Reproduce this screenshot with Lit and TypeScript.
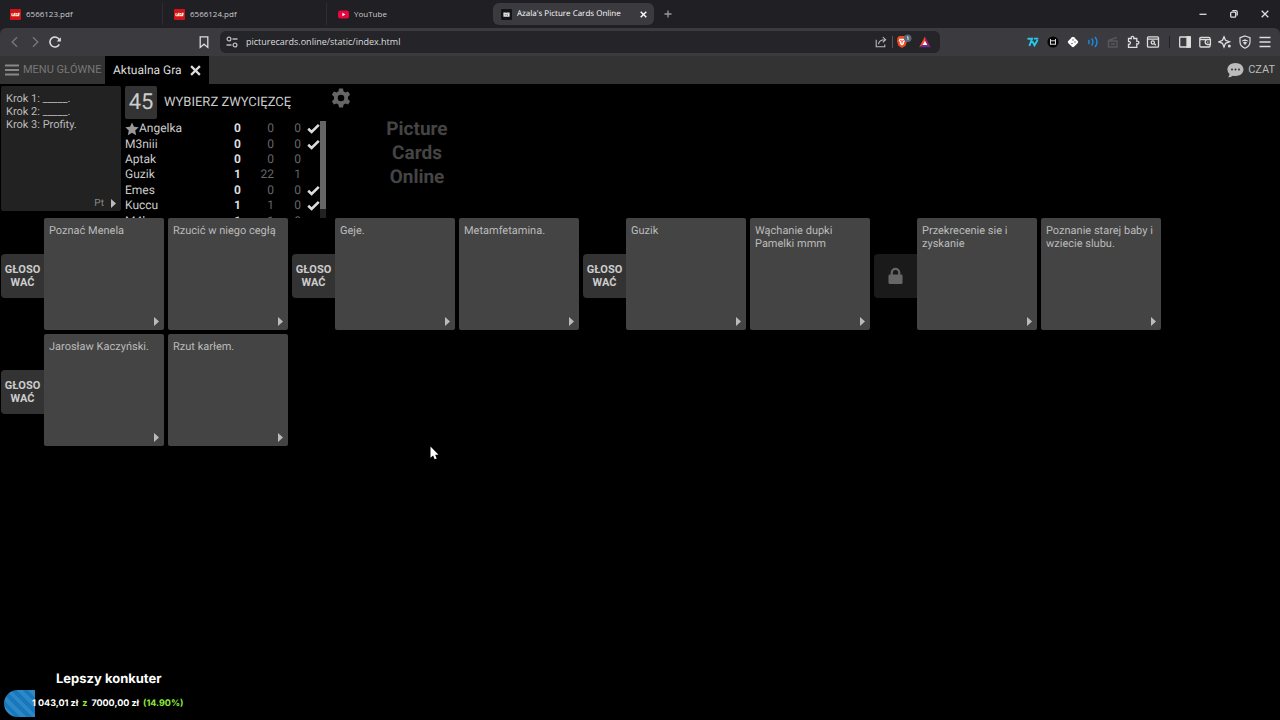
import { LitElement, html, css, svg, nothing } from "lit";
import { customElement } from "lit/decorators.js";

const lego = svg`<svg class="fav" viewBox="0 0 11 11"><rect width="11" height="11" rx="1" fill="#d0121b"/><path d="M1.6 6.6 2.2 4.2M1.6 6.8h1.5M4.2 4.3 3.6 6.8h1.3M4.2 4.4h1.2M4 5.6h1.1M7.2 4.5H6.3L5.8 6.8h1.1l.2-1M9.1 4.4H8.3L7.8 6.8h.9z" stroke="#ffe9c8" stroke-width="1.1" fill="none"/></svg>`;
const youtube = svg`<svg class="fav" viewBox="0 0 11 11"><rect y="1.5" width="11" height="8" rx="2" fill="#e8063c"/><path d="M4.4 3.7v3.6L7.4 5.5z" fill="#fff"/></svg>`;
const azala = svg`<svg class="fav" viewBox="0 0 11 11"><rect width="11" height="11" rx="1" fill="#141416"/><path d="M2.4 3.4h2.200l.5.6.6-.6h2.900v4.400H2.400z" fill="#e4e4e4"/><path d="M4.300 5v1.400M6.600 4.700l-.8 1.200 1 .8" stroke="#555" stroke-width=".7" fill="none"/></svg>`;
const cross = svg`<svg viewBox="0 0 10 10" class="x"><path d="M1 1 9 9M9 1 1 9"/></svg>`;
const check = svg`<svg class="check" viewBox="0 0 13 11"><path d="M1.2 5.8 4.6 9 11.8 1.8" fill="none" stroke="#ddd" stroke-width="2.6"/></svg>`;
const star = svg`<svg class="star" viewBox="0 0 14 14"><path d="M7 .4 9 4.7l4.7.5-3.5 3.2 1 4.8L7 10.8l-4.2 2.4 1-4.8L.3 5.2 5 4.7z" fill="#999"/></svg>`;
const lock = svg`<svg class="lock" viewBox="0 0 16 18"><path d="M4 9V5.4a4 4 0 0 1 8 0V9" fill="none" stroke="#666" stroke-width="2.4"/><rect x=".5" y="7.5" width="15" height="10" rx="1.4" fill="#666"/></svg>`;

type Player = [string, number, number, number, boolean];
const players: Player[] = [
  ["Angelka", 0, 0, 0, true],
  ["M3niii", 0, 0, 0, true],
  ["Aptak", 0, 0, 0, false],
  ["Guzik", 1, 22, 1, false],
  ["Emes", 0, 0, 0, true],
  ["Kuccu", 1, 1, 0, true],
  ["M4lozes", 1, 1, 0, false],
];

const answers: { cards: string[]; own?: boolean }[] = [
  { cards: ["Poznać Menela", "Rzucić w niego cegłą"] },
  { cards: ["Geje.", "Metamfetamina."] },
  { cards: ["Guzik", "Wąchanie dupki Pamelki mmm"] },
  { cards: ["Przekrecenie sie i zyskanie", "Poznanie starej baby i wziecie slubu."], own: true },
  { cards: ["Jarosław Kaczyński.", "Rzut karłem."] },
];

@customElement("browser-chrome")
class BrowserChrome extends LitElement {
  static styles = css`
    :host { display: block; background: #1f1f24; font-family: "Open Sans", sans-serif; color: #ccc; }
    * { box-sizing: border-box; }
    button { border: 0; padding: 0; margin: 0; background: none; color: inherit; font: inherit; display: grid; place-items: center; }
    svg { display: block; }
    .strip { display: flex; align-items: center; height: 28px; }
    .tabs { display: flex; align-items: center; gap: 1px; }
    .tab { width: 164px; height: 22px; padding: 0 0 0 10px; display: flex; align-items: center; gap: 5px; font: 8px/12px "Open Sans", sans-serif; color: #ccc; }
    .tab.split { width: 163px; border-right: 1px solid #2d2d33; }
    .tab.on { width: 161px; background: #3a3a3f; border-radius: 6px; color: #fff; padding: 0 6px 0 8px; }
    .tab .name { flex: 1; text-align: left; white-space: nowrap; }
    .fav { width: 11px; height: 11px; flex: none; }
    .x { width: 8px; height: 8px; stroke: currentColor; stroke-width: 1.6; fill: none; }
    .close { width: 10px; height: 10px; }
    .close .x { width: 7px; height: 7px; stroke-width: 2; }
    .plus { width: 28px; height: 22px; color: #999; }
    .win { margin-left: auto; display: flex; padding-right: 0; color: #ddd; }
    .win button { width: 31px; height: 28px; }
    .bar { display: grid; grid-template-columns: 220px minmax(0, 720px) 1fr; align-items: center; height: 28px; background: #3a3a3f; border-radius: 6px 6px 0 0; }
    .nav { display: flex; align-items: center; padding: 0 8px 0 5px; color: #ddd; }
    .nav button { width: 20px; height: 20px; }
    .nav .dim { color: #77777c; }
    .nav .mark { margin-left: auto; width: 16px; }
    .address { display: flex; align-items: center; height: 22px; border-radius: 6px; background: #242429; padding: 0 6px 0 5px; color: #bbb; }
    .address input { flex: 1; min-width: 0; border: 0; background: none; color: #ddd; font: 9px/14px "Open Sans", sans-serif; padding: 0 0 0 7px; outline: 0; }
    .address button { width: 18px; height: 18px; }
    .site { width: 12px; height: 12px; flex: none; }
    .div { width: 1px; height: 12px; background: #55555a; margin: 0 1px 0 2px; }
    .address .triangle { margin-left: 4px; }
    .ext { display: flex; align-items: center; justify-content: flex-end; padding-right: 5px; color: #ddd; }
    .ext button { width: 20px; height: 20px; }
    .ext .gap { width: 12px; display: grid; place-items: center; }
    .ext .gap::after { content: ""; width: 1px; height: 12px; background: #222226; }
    .i { width: 14px; height: 14px; fill: none; stroke: currentColor; stroke-width: 1.3; }
  `;
  render() {
    return html`
      <div class="strip">
        <div class="tabs" role="tablist">
          <button class="tab split" role="tab">${lego}<span class="name">6566123.pdf</span></button>
          <button class="tab split" role="tab">${lego}<span class="name">6566124.pdf</span></button>
          <button class="tab" role="tab">${youtube}<span class="name">YouTube</span></button>
          <div class="tab on" role="tab" aria-selected="true">${azala}<span class="name">Azala's Picture Cards Online</span>
            <button class="close" aria-label="Zamknij kartę">${cross}</button></div>
        </div>
        <button class="plus" aria-label="Nowa karta"><svg class="i" viewBox="0 0 14 14"><path d="M7 3.5v7M3.5 7h7"/></svg></button>
        <div class="win">
          <button aria-label="Minimalizuj"><svg class="i" viewBox="0 0 14 14"><path d="M3.5 7.3h7"/></svg></button>
          <button aria-label="Przywróć"><svg class="i" viewBox="0 0 14 14"><rect x="3.7" y="5.2" width="5" height="5" rx="1"/><path d="M5.3 3.7h3.6q1.3 0 1.3 1.3v3.6"/></svg></button>
          <button aria-label="Zamknij"><svg class="i" viewBox="0 0 14 14"><path d="m3.7 3.7 6.6 6.6M10.3 3.7l-6.6 6.6"/></svg></button>
        </div>
      </div>
      <div class="bar">
        <div class="nav">
          <button class="dim" aria-label="Wstecz"><svg class="i" viewBox="0 0 14 14"><path d="M9 2.2 4.2 7 9 11.8"/></svg></button>
          <button class="dim" aria-label="Dalej"><svg class="i" viewBox="0 0 14 14"><path d="M5 2.2 9.8 7 5 11.8"/></svg></button>
          <button aria-label="Odśwież"><svg class="i" viewBox="0 0 14 14"><path d="M11.3 9.400A5 5 0 1 1 11.500 5" stroke-width="1.6"/><path d="M12.900 2.300v4.200H8.700z" fill="currentColor" stroke="none"/></svg></button>
          <button class="mark" aria-label="Zakładka"><svg class="i" viewBox="0 0 14 14"><path d="M3.200 1.800h7.600v10.600L7 9.200l-3.800 3.200z"/></svg></button>
        </div>
        <div class="address">
          <svg class="i site" viewBox="0 0 14 14"><circle cx="4" cy="4" r="1.900"/><path d="M7.500 4h5M1.500 10h5"/><circle cx="10" cy="10" r="1.900"/></svg>
          <input aria-label="Adres" value="picturecards.online/static/index.html" />
          <button aria-label="Udostępnij"><svg class="i" viewBox="0 0 14 14"><path d="M2.200 4.800v7h8.600V9.500M4.500 9.300c.3-3 2.500-4.600 6.600-4.600M8.800 2.200l2.800 2.500-2.800 2.600" stroke-width="1.100"/></svg></button>
          <span class="div"></span>
          <button aria-label="Brave Shields"><svg width="18" height="16" viewBox="0 0 18 16"><path d="M3 4.200 5 2h6l2 2.200-.4 1.200.5 1.500-1.500 4.800L8 14l-3.600-2.300L2.900 6.900l.5-1.500z" fill="#ee4a22"/><path d="M5.500 4.700h5l.8 1.800-1.500 2.200.4 1.100L8 11.500 5.800 9.800l.4-1.100-1.500-2.200z" fill="#fff"/><path d="M6.300 6.500 8 7.200l1.700-.7M8 7v2.500" stroke="#ee4a22" fill="none"/><circle cx="13.700" cy="4.300" r="3.800" fill="#596475"/><path d="M13 3.300l1-.6v3.400" stroke="#fff" stroke-width=".8" fill="none"/></svg></button>
          <button class="triangle" aria-label="Nagrody"><svg width="12" height="12" viewBox="0 0 12 12"><path d="M6 .5V8L.2 11.300z" fill="#ff4724"/><path d="M6 .5 11.800 11.300 6 8z" fill="#9e1f63"/><path d="M6 7.500l5.800 3.800H.2z" fill="#662d91"/><path d="M6 4.700 8.300 8.900H3.700z" fill="#fff"/></svg></button>
        </div>
        <div class="ext">
          <button aria-label="7TV"><svg width="12" height="12" viewBox="0 0 12 12" fill="none" stroke="#29c5ea" stroke-width="1.900"><path d="M.5 2.700h4.600L2.400 10M5.300 5.300 7.500 9.300 10.600 4M7 2.600h4.300"/></svg></button>
          <button aria-label="Rozszerzenie"><svg width="12" height="12" viewBox="0 0 12 12"><circle cx="6" cy="6" r="5.600" fill="#050505"/><path d="M3.500 3v5.800M8.500 3v5.800M3.500 4.800h5M4 8.200h4" stroke="#ddd" fill="none"/></svg></button>
          <button aria-label="Rozszerzenie"><svg width="12" height="12" viewBox="0 0 12 12"><path d="M5 1.200Q6 .4 7 1.200l3.800 3.800q.9 1 0 2L7 10.800q-1 .9-2 0L1.200 7q-.9-1 0-2z" fill="#fff"/><circle cx="6" cy="4" r=".7" fill="#555"/><circle cx="8" cy="6" r=".7" fill="#555"/><circle cx="5" cy="7.500" r=".7" fill="#555"/></svg></button>
          <button aria-label="Dźwięk"><svg width="12" height="12" viewBox="0 0 12 12" stroke="#1e88dc" stroke-width="1.500" fill="none"><path d="M1.500 4q1.200 2 0 4M4.700 2.500q2.400 3.500 0 7M8 1q4 5 0 10"/></svg></button>
          <button aria-label="Rozszerzenie"><svg width="12" height="12" viewBox="0 0 12 12" stroke="#58585c" fill="none" stroke-width="1.400"><path d="M1.500 5h8.500v6H1.500zM1.500 4.300 10 1.500M4 8h4"/></svg></button>
          <button aria-label="Rozszerzenia"><svg class="i" viewBox="0 0 14 14"><path d="M2.500 3.500h2.800C4.500.6 8.500.6 7.800 3.500h3v2.800c2.800-.7 2.800 3.300 0 2.600v3.400H2.500V9.300c2.500.4 2.500-3.200 0-2.800z"/></svg></button>
          <button aria-label="Szukaj"><svg class="i" viewBox="0 0 14 14"><rect x="1.500" y="1.800" width="11" height="10.400" rx="1"/><path d="M1.500 4.200h11M8.300 8.700l1.600 1.500"/><circle cx="6.800" cy="7.500" r="1.600"/></svg></button>
          <span class="gap"></span>
          <button aria-label="Panel boczny"><svg class="i" viewBox="0 0 14 14"><rect x="1.700" y="2" width="10.600" height="10" rx=".6"/><path d="M9 2h3.300v10H9z" fill="currentColor"/></svg></button>
          <button aria-label="Portfel"><svg class="i" viewBox="0 0 14 14"><path d="M12 4.700V3.500q0-1-1-1H3q-1.200 0-1.200 1.200V11q0 1 1 1H11q1 0 1-1V9.500M1.800 4.700H12.400v4.800H9.500q-2.300-.2-2.300-2.400T9.500 4.700"/><path d="M9.200 7.100h1.200"/></svg></button>
          <button aria-label="Leo"><svg class="i" viewBox="0 0 14 14"><path d="M6 1.800 7.500 5.300 11.500 6.800 7.500 8.300 6 12 4.500 8.300.9 6.800 4.500 5.300z"/><circle cx="11.300" cy="11" r="1.500" fill="currentColor" stroke="none"/></svg></button>
          <button aria-label="VPN"><svg class="i" viewBox="0 0 14 14"><path d="M7 1 12 2.700V7q0 4-5 6.300Q2 11 2 7V2.700z" stroke-width="1.200"/><path d="M4.200 6q2.800-2.400 5.600 0M5.500 7.600q1.500-1.100 3 0L7 9.500z" fill="currentColor" stroke-width="1"/></svg></button>
          <button aria-label="Menu"><svg class="i" viewBox="0 0 14 14"><path d="M1.500 2.500h11M1.500 7h11M1.500 11.500h11"/></svg></button>
        </div>
      </div>`;
  }
}

@customElement("answer-group")
class AnswerGroup extends LitElement {
  static properties = { cards: { attribute: false }, own: { type: Boolean } };
  declare cards: string[];
  declare own: boolean;
  static styles = css`
    :host { display: flex; align-items: flex-start; }
    * { box-sizing: border-box; }
    .vote { width: 43px; height: 44px; margin-top: 36px; padding: 0; border: 0; border-radius: 4px 0 0 4px; background: #333; color: #ccc; font: bold 11px/13px Roboto, sans-serif; display: grid; place-items: center; }
    .vote.own { background: #1a1a1a; }
    .lock { width: 15px; height: 18px; display: block; }
    .cards { display: flex; gap: 4px; }
    .card { width: 120px; height: 112px; padding: 6px 5px 4px; border-radius: 2px; background: #444; color: #bbb; font: 11px/13px Roboto, sans-serif; display: flex; flex-direction: column; justify-content: space-between; }
    .more { align-self: flex-end; width: 5px; height: 9px; display: block; }
  `;
  render() {
    return html`
      ${this.own
        ? html`<button class="vote own" disabled aria-label="Zablokowane">${lock}</button>`
        : html`<button class="vote"><span>GŁOSO<br />WAĆ</span></button>`}
      <div class="cards">
        ${this.cards.map((c) => html`<article class="card"><span>${c}</span>
          <svg class="more" viewBox="0 0 5 9"><path d="M0 0 5 4.500 0 9z" fill="#bbb"/></svg></article>`)}
      </div>`;
  }
}

@customElement("app-root")
class AppRoot extends LitElement {
  static styles = css`
    :host { display: block; position: relative; min-height: 100vh; overflow: hidden; background: #000; color: #bbb; font-family: Roboto, sans-serif; text-rendering: geometricPrecision; }
    * { box-sizing: border-box; }
    button { border: 0; padding: 0; margin: 0; background: none; color: inherit; font: inherit; }
    svg { display: block; flex: none; }
    .menu { display: flex; height: 28px; background: #333; font-size: 12px; line-height: 16px; }
    .menu button { display: flex; align-items: center; }
    .menu .main { width: 105px; padding-left: 5px; gap: 4px; color: #777; font-size: 11px; white-space: nowrap; }
    .current { display: flex; align-items: center; gap: 8px; width: 104px; padding: 0 8px; justify-content: space-between; background: #000; color: #ddd; white-space: nowrap; }
    .current .x { width: 11px; height: 11px; stroke: #ddd; stroke-width: 2; fill: none; }
    .menu .chat { margin-left: auto; gap: 4px; padding-right: 5px; color: #bbb; font-size: 11px; }
    .top { display: flex; height: 134px; padding: 2px 1px 0; }
    .prompt { width: 120px; height: 125px; padding: 6px 5px 1px; border-radius: 2px; background: #222; color: #bbb; font-size: 11px; line-height: 13px; display: flex; flex-direction: column; justify-content: space-between; }
    .prompt p { margin: 0; }
    .pick { align-self: flex-end; display: flex; align-items: center; gap: 7px; color: #888; font-size: 10px; }
    .board { width: 201px; margin-left: 4px; display: flex; flex-direction: column; gap: 2px; }
    .status { display: flex; align-items: center; gap: 7px; height: 33px; color: #ccc; }
    .timer { width: 32px; height: 33px; background: #333; border-radius: 2px; font-size: 22px; line-height: 34px; text-align: center; }
    .status h1 { margin: 0; font-size: 13px; line-height: 16px; font-weight: 400; white-space: nowrap; }
    .list { display: flex; height: 97px; overflow: hidden; }
    .scores { flex: 1; table-layout: fixed; border-collapse: collapse; height: 108px; font-size: 12px; line-height: 15px; color: #ccc; }
    .scores td { padding: 0; text-align: right; color: #666; }
    .scores .who { width: 88px; text-align: left; color: #ccc; }
    .who span { display: flex; align-items: center; }
    .scores .pts { width: 28px; color: #ddd; font-weight: 700; }
    .scores .num { width: 33px; }
    .scores .tot { width: 27px; }
    .scores .done { padding-left: 6px; }
    .check { width: 13px; height: 11px; }
    .star { width: 14px; height: 14px; }
    .track { width: 6px; background: #222; }
    .thumb { height: 88px; background: #666; }
    .gear { align-self: flex-start; width: 20px; margin: 2px 0 0 5px; }
    .logo { width: 76px; margin: 31px 0 0 28px; font-size: 19px; line-height: 24px; font-weight: 700; color: #444; text-align: center; }
    .answers { display: flex; flex-wrap: wrap; gap: 4px; padding: 0 1px; }
    .goal { position: absolute; left: 4px; bottom: 3px; font: bold 9px/14px Inter, sans-serif; color: #fff; }
    .goal h2 { margin: 0 0 2px; padding-left: 52px; font-size: 13px; line-height: 18px; }
    .meter { display: flex; align-items: center; height: 27px; white-space: nowrap; }
    .fill { width: 31px; height: 27px; border-radius: 14px 0 0 14px; background: repeating-linear-gradient(45deg, #1878bd 0 4px, #2e88c6 4px 8px); }
    .amount { display: flex; gap: 4px; margin-left: -3px; }
    .lime { color: #8fea3c; }
    .cursor { position: absolute; left: 430px; top: 446px; width: 9px; height: 14px; }
  `;
  render() {
    return html`
      <browser-chrome></browser-chrome>
      <nav class="menu">
        <button class="main"><svg width="14" height="14" viewBox="0 0 14 14"><path d="M0 2.500h14M0 7h14M0 11.500h14" stroke="#888" stroke-width="2"/></svg>MENU GŁÓWNE</button>
        <div class="current">Aktualna Gra<button aria-label="Zamknij">${cross}</button></div>
        <button class="chat"><svg width="17" height="16" viewBox="0 0 17 16"><path d="M8.500 1C13 1 16.500 3.800 16.500 7.500S13 14 8.500 14q-1.500 0-2.800-.3Q4 15.300 1 15.300 2.600 13.800 2.500 12 .4 10.200.4 7.500C.4 3.800 4 1 8.500 1z" fill="#bbb"/><g fill="#333"><circle cx="5" cy="7.500" r="1"/><circle cx="8.500" cy="7.500" r="1"/><circle cx="12" cy="7.500" r="1"/></g></svg>CZAT</button>
      </nav>
      <section class="top">
        <article class="prompt"><p>Krok 1: _____.<br />Krok 2: _____.<br />Krok 3: Profity.</p>
          <span class="pick">Pt<svg width="5" height="9" viewBox="0 0 5 9"><path d="M0 0 5 4.500 0 9z" fill="#bbb"/></svg></span></article>
        <div class="board">
          <div class="status"><span class="timer">45</span><h1>WYBIERZ ZWYCIĘZCĘ</h1></div>
          <div class="list">
            <table class="scores"><tbody>
              ${players.map(([n, a, b, c, done], i) => html`<tr><td class="who"><span>${i === 0 ? star : nothing}${n}</span></td><td class="pts">${a}</td><td class="num">${b}</td><td class="tot">${c}</td><td class="done">${done ? check : nothing}</td></tr>`)}
            </tbody></table>
            <div class="track"><div class="thumb"></div></div>
          </div>
        </div>
        <button class="gear" aria-label="Ustawienia"><svg width="20" height="22" viewBox="0 0 20 22"><path fill-rule="evenodd" fill="#666" d="M8 .5h4l.5 2.800 1.900 1.100 2.700-1 2 3.400-2.200 1.900v2.600l2.200 1.900-2 3.400-2.700-1-1.900 1.100-.5 2.800H8l-.5-2.800-1.900-1.100-2.700 1-2-3.400 2.200-1.900V8.700L.9 6.800l2-3.400 2.700 1 1.900-1.100zM10 6.700a3.300 3.300 0 1 0 0 6.600 3.300 3.300 0 0 0 0-6.600z"/></svg></button>
        <div class="logo">Picture<br />Cards<br />Online</div>
      </section>
      <main class="answers">
        ${answers.map((g) => html`<answer-group .cards=${g.cards} ?own=${g.own}></answer-group>`)}
      </main>
      <svg class="cursor" viewBox="0 0 9 14"><path d="M.5.5v11.200l2.600-2.300 1.600 3.900 2-.9-1.600-3.700h3.400z" fill="#fff"/></svg>
      <aside class="goal">
        <h2>Lepszy konkuter</h2>
        <div class="meter"><div class="fill"></div><div class="amount"><span>1 043,01 zł</span><span class="lime">z</span><span>7000,00 zł</span><span class="lime">(14.90%)</span></div></div>
      </aside>`;
  }
}
